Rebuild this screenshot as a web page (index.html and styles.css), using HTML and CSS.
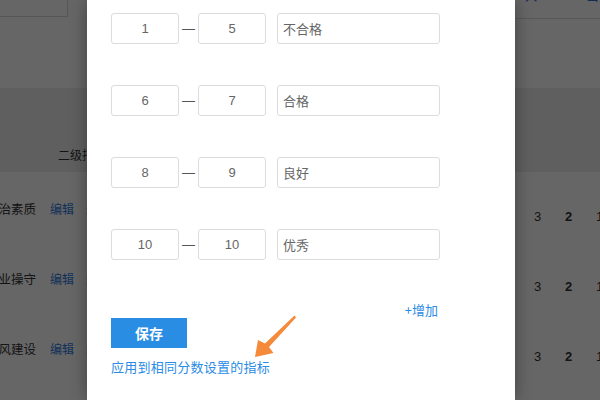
FILE: index.html
```html
<!DOCTYPE html>
<html lang="zh">
<head>
<meta charset="utf-8">
<link rel="stylesheet" href="styles.css">
</head>
<body>
<div class="page">
  <div class="toolbar">
    <div class="tb-box">批量设置</div>
    <div class="tb-right">
      <span class="tb-link">导入</span>
      <span class="tb-link tb-link2">导出</span>
    </div>
  </div>
  <div class="thead">
    <div class="th">二级指标</div>
  </div>
  <div class="trow">
    <div class="c-name"><span>政治素质</span></div>
    <div class="c-op">编辑</div>
    <div class="c-op c-op2">删除</div>
    <div class="c-nums"><span class="n">3</span><span class="n b">2</span><span class="n">1</span></div>
  </div>
  <div class="trow">
    <div class="c-name"><span>职业操守</span></div>
    <div class="c-op">编辑</div>
    <div class="c-op c-op2">删除</div>
    <div class="c-nums"><span class="n">3</span><span class="n b">2</span><span class="n">1</span></div>
  </div>
  <div class="trow">
    <div class="c-name"><span>作风建设</span></div>
    <div class="c-op">编辑</div>
    <div class="c-op c-op2">删除</div>
    <div class="c-nums"><span class="n">3</span><span class="n b">2</span><span class="n">1</span></div>
  </div>
</div>
<div class="mask"></div>
<div class="modal">
  <div class="form">
    <div class="frow">
      <div class="inp num">1</div><div class="dash">—</div><div class="inp num">5</div><div class="inp label">不合格</div>
    </div>
    <div class="frow">
      <div class="inp num">6</div><div class="dash">—</div><div class="inp num">7</div><div class="inp label">合格</div>
    </div>
    <div class="frow">
      <div class="inp num">8</div><div class="dash">—</div><div class="inp num">9</div><div class="inp label">良好</div>
    </div>
    <div class="frow">
      <div class="inp num">10</div><div class="dash">—</div><div class="inp num">10</div><div class="inp label">优秀</div>
    </div>
    <div class="add"><span>+增加</span></div>
    <div class="save">保存</div>
    <div class="apply">应用到相同分数设置的指标</div>
  </div>
  <svg class="arrow" width="60" height="60" viewBox="0 0 60 60">
    <polygon points="47.5,5.5 49,7.5 22,37 26.5,43 8,47 11,30 18,33.5" fill="#f58a3a"/>
  </svg>
</div>
</body>
</html>
```

FILE: styles.css
```css
html, body {
  margin: 0;
  padding: 0;
}
body {
  width: 600px;
  height: 400px;
  overflow: hidden;
  position: relative;
  font-family: "Noto Sans CJK SC", "Liberation Sans", sans-serif;
  background: #fff;
}
.page {
  width: 600px;
  height: 400px;
  background: #fff;
  color: #333;
  font-size: 12px;
}
.toolbar {
  height: 88px;
  display: flex;
  justify-content: space-between;
  align-items: flex-start;
}
.tb-box {
  width: 90px;
  height: 38px;
  margin-top: -21px;
  margin-left: -22px;
  border: 1px solid #d8d8d8;
  box-sizing: border-box;
  display: flex;
  align-items: flex-end;
  justify-content: center;
  padding-bottom: 18px;
  line-height: 14px;
  color: #222;
}
.tb-right {
  width: 85px;
  height: 18px;
  border-bottom: 1px solid #dcdcdc;
  display: flex;
  align-items: flex-end;
}
.tb-link {
  color: #2d6fd0;
  margin-left: 10px;
  line-height: 14px;
  margin-bottom: 15px;
}
.tb-link2 {
  margin-left: 48px;
}
.thead {
  height: 84px;
  background: #eeeeee;
  display: flex;
  align-items: flex-start;
}
.th {
  margin-left: 58px;
  margin-top: 59px;
  line-height: 16px;
  white-space: nowrap;
  color: #333;
}
.trow {
  height: 70px;
  display: flex;
  align-items: flex-start;
}
.c-name {
  width: 36px;
  display: flex;
  justify-content: flex-end;
  white-space: nowrap;
  padding-top: 29px;
  line-height: 16px;
  font-size: 12.5px;
}
.c-op {
  margin-left: 14px;
  padding-top: 29px;
  line-height: 16px;
  color: #2d7be0;
  font-size: 12px;
}
.c-op2 {
  margin-left: 12px;
}
.c-nums {
  margin-left: auto;
  display: flex;
  padding-top: 37px;
  line-height: 16px;
  font-family: "Liberation Sans", sans-serif;
  font-size: 13px;
  margin-right: -15px;
}
.n {
  width: 31px;
  text-align: center;
}
.b {
  font-weight: bold;
}
.mask {
  position: absolute;
  inset: 0;
  background: rgba(0, 0, 0, 0.6);
}
.modal {
  position: absolute;
  left: 87px;
  top: 0;
  width: 428px;
  height: 400px;
  background: #fff;
  box-shadow: 0 0 16px rgba(0, 0, 0, 0.35);
}
.form {
  width: 329px;
  padding: 13px 0 0 24px;
}
.frow {
  display: flex;
  height: 31px;
  margin-bottom: 41px;
}
.inp {
  box-sizing: border-box;
  height: 31px;
  border: 1px solid #dcdcdc;
  border-radius: 3px;
  font-size: 13px;
  line-height: 29px;
  color: #666;
}
.num {
  width: 68px;
  text-align: center;
  font-family: "Liberation Sans", sans-serif;
}
.dash {
  width: 19px;
  text-align: center;
  font-family: "Liberation Sans", sans-serif;
  font-size: 13px;
  line-height: 31px;
  color: #555;
}
.label {
  width: 163px;
  margin-left: 11px;
  padding-left: 5px;
  font-family: "Noto Sans CJK SC", sans-serif;
}
.add {
  height: 17px;
  line-height: 17px;
  text-align: right;
  padding-right: 2px;
  color: #2b8ce6;
  font-size: 13px;
}
.save {
  width: 76px;
  height: 30px;
  background: #2a8de4;
  color: #fff;
  font-weight: bold;
  font-size: 14px;
  line-height: 30px;
  text-align: center;
}
.apply {
  margin-top: 9px;
  line-height: 20px;
  font-size: 13px;
  letter-spacing: 0.25px;
  color: #2b8ce6;
  white-space: nowrap;
}
.arrow {
  position: absolute;
  left: 160px;
  top: 310px;
}
```
